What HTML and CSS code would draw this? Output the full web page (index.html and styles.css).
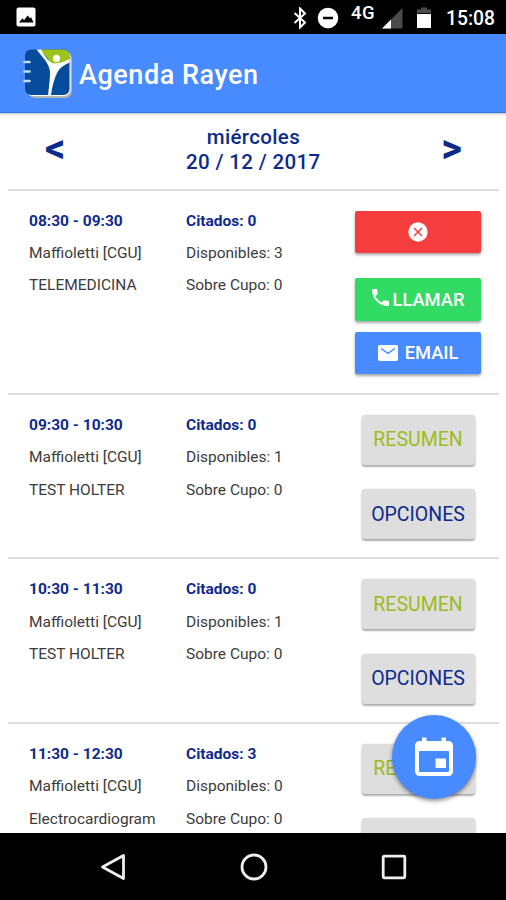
FILE: index.html
```
<!DOCTYPE html>
<html lang="es">
<head>
  <meta charset="UTF-8">
  <meta name="viewport" content="width=device-width, initial-scale=1">
  <title>Agenda Rayen</title>
  <link rel="stylesheet" href="styles.css">
</head>
<body>
  <div class="status-bar">
    <svg class="icon-image" width="20" height="20" viewBox="0 0 20 20"><rect x="0.5" y="0.5" width="19" height="19" rx="2" fill="#fff"/><path d="M3 15.500l3.200-4 2 1.500 3.500-4.500 2 2.500 1.500-.5 2.300 5z" fill="#000"/></svg>
    <svg class="icon-bluetooth" width="14" height="22" viewBox="0 0 14 22"><path d="M1.500 6l10.500 9.500-5 5V1.500l5 5L1.500 16" fill="none" stroke="#fff" stroke-width="2"/></svg>
    <svg class="icon-dnd" width="22" height="22" viewBox="0 0 22 22"><circle cx="11" cy="11" r="10.300" fill="#fff"/><path d="M6 11h10" stroke="#000" stroke-width="2.500"/></svg>
    <span class="red">4G</span>
    <svg class="icon-signal" width="21" height="21" viewBox="0 0 21 21"><path d="M20.500 0v20.500H0z" fill="#4b4b4b"/><path d="M9 11.500v9H0z" fill="#fff"/></svg>
    <svg class="icon-battery" width="16" height="22" viewBox="0 0 16 22"><path d="M1 6V2.500h4V0.500h6v2h4V6z" fill="#4b4b4b"/><path d="M1 7h14v14H1z" fill="#fff"/></svg>
    <span class="hora">15:08</span>
  </div>

  <header class="header">
    <svg class="logo" width="50" height="50" viewBox="0 0 50 50">
      <rect x="5" y="4" width="44" height="46" rx="7" fill="#b4b4b0"/>
      <rect x="3" y="2" width="44.500" height="46" rx="6.500" fill="#fff"/>
      <rect x="2" y="1.500" width="44.500" height="45.500" rx="6" fill="#064b9c"/>
      <path d="M17 1.500h23.500a6 6 0 0 1 6 6v5L30 17z" fill="#9dc41c"/>
      <path d="M13.500 1.500H18C21 7 25 13 30 15.500c5 0 11-1.500 16.500-4.500v3.500C41 17 36.500 20 34.500 24 31 31 29 39 28 47h-2.800c.8-10 2.300-18 1.600-25C25.500 14.500 18 7.500 13.500 1.500z" fill="#fff"/>
      <circle cx="33.500" cy="10.300" r="3.600" fill="#fff"/>
      <path d="M1.500 14h5M1.500 23.500h5M1.500 33h5" stroke="#c4dcff" stroke-width="2.600" stroke-linecap="round"/>
    </svg>
    <h1>Agenda Rayen</h1>
  </header>

  <main class="contenido">
    <div class="fecha">
      <span class="flecha">&lt;</span>
      <div class="dia">miércoles<br>20 / 12 / 2017</div>
      <span class="flecha">&gt;</span>
    </div>

    <div class="bloque bloque-abierto">
      <div class="col-hora"><b>08:30 - 09:30</b><p>Maffioletti [CGU]</p><p>TELEMEDICINA</p></div>
      <div class="col-cupos"><b>Citados: 0</b><p>Disponibles: 3</p><p>Sobre Cupo: 0</p></div>
      <div class="acciones">
        <button class="btn btn-cerrar"><svg width="20" height="20" viewBox="0 0 20 20"><circle cx="10" cy="10" r="9.700" fill="#fff"/><path d="M6 6l8 8M14 6l-8 8" stroke="#f53d3d" stroke-width="1.500"/></svg></button>
        <button class="btn btn-llamar"><svg width="17" height="17" viewBox="3 3 18 18"><path d="M6.620 10.790c1.440 2.830 3.760 5.140 6.590 6.590l2.200-2.200c.27-.27.67-.36 1.020-.24 1.120.37 2.330.57 3.570.57.55 0 1 .45 1 1V20c0 .55-.45 1-1 1-9.390 0-17-7.610-17-17 0-.55.45-1 1-1h3.500c.55 0 1 .45 1 1 0 1.250.2 2.450.57 3.570.11.35.03.74-.25 1.020z" fill="#fff"/></svg><span>LLAMAR</span></button>
        <button class="btn btn-email"><svg width="20" height="16" viewBox="0 0 20 16"><rect width="20" height="16" rx="1.800" fill="#fff"/><path d="M3 3.500l7 4.800 7-4.800" fill="none" stroke="#488aff" stroke-width="1.500"/></svg><span>EMAIL</span></button>
      </div>
    </div>

    <div class="bloque">
      <div class="col-hora"><b>09:30 - 10:30</b><p>Maffioletti [CGU]</p><p>TEST HOLTER</p></div>
      <div class="col-cupos"><b>Citados: 0</b><p>Disponibles: 1</p><p>Sobre Cupo: 0</p></div>
      <div class="acciones">
        <button class="btn-gris resumen">RESUMEN</button>
        <button class="btn-gris opciones">OPCIONES</button>
      </div>
    </div>

    <div class="bloque">
      <div class="col-hora"><b>10:30 - 11:30</b><p>Maffioletti [CGU]</p><p>TEST HOLTER</p></div>
      <div class="col-cupos"><b>Citados: 0</b><p>Disponibles: 1</p><p>Sobre Cupo: 0</p></div>
      <div class="acciones">
        <button class="btn-gris resumen">RESUMEN</button>
        <button class="btn-gris opciones">OPCIONES</button>
      </div>
    </div>

    <div class="bloque">
      <div class="col-hora"><b>11:30 - 12:30</b><p>Maffioletti [CGU]</p><p>Electrocardiogram</p></div>
      <div class="col-cupos"><b>Citados: 3</b><p>Disponibles: 0</p><p>Sobre Cupo: 0</p></div>
      <div class="acciones">
        <button class="btn-gris resumen">RESUMEN</button>
        <button class="btn-gris opciones"></button>
      </div>
    </div>

    <button class="fab">
      <svg width="40" height="40" viewBox="0 0 40 40"><path d="M8 0.500h4.500V4h15V0.500H32V4h2.500a4.500 4.500 0 0 1 4.500 4.500v26a4.500 4.500 0 0 1-4.500 4.500h-29A4.500 4.500 0 0 1 1 34.500v-26A4.500 4.500 0 0 1 5.500 4H8z" fill="#fff"/><rect x="5" y="14" width="30" height="21" rx="1" fill="#488aff"/><path d="M21.500 21.500H32V31H21.500z" fill="#fff"/></svg>
    </button>
  </main>

  <nav class="nav-bar">
    <svg width="26" height="28" viewBox="0 0 26 28"><path d="M23.500 2.500v23L2.500 14z" fill="none" stroke="#eee" stroke-width="2.800" stroke-linejoin="round"/></svg>
    <svg width="28" height="28" viewBox="0 0 28 28"><circle cx="14" cy="14" r="12" fill="none" stroke="#eee" stroke-width="2.800"/></svg>
    <svg width="26" height="26" viewBox="0 0 26 26"><rect x="2.200" y="2.200" width="21.600" height="21.600" rx="1" fill="none" stroke="#eee" stroke-width="2.800"/></svg>
  </nav>
</body>
</html>
```
FILE: styles.css
```
* {
  box-sizing: border-box;
}

body {
  margin: 0;
  height: 900px;
  display: flex;
  flex-direction: column;
  overflow: hidden;
  background-color: #fff;
  color: #3c3c3c;
  font-family: Roboto, sans-serif;
}

svg {
  display: block;
  flex: none;
}

p {
  margin: 0;
}

button {
  border: none;
  padding: 0;
  font-family: inherit;
  cursor: pointer;
}

.status-bar {
  flex: none;
  height: 34px;
  display: flex;
  align-items: flex-start;
  background-color: #000;
  color: #fff;
}

.icon-image {
  margin: 7px 0 0 16px;
}

.icon-bluetooth {
  margin: 7px 0 0 257px;
}

.icon-dnd {
  margin: 7px 0 0 10px;
}

.red {
  width: 26px;
  margin: 3px 0 0 12px;
  font-size: 18.5px;
  font-weight: 500;
  line-height: 20px;
  letter-spacing: 0.5px;
}

.icon-signal {
  margin: 8px 0 0 5px;
}

.icon-battery {
  margin: 7px 0 0 13px;
}

.hora {
  margin: 7px 0 0 14px;
  font-size: 19.3px;
  font-weight: 500;
  line-height: 23px;
  white-space: nowrap;
}

.header {
  flex: none;
  height: 79px;
  display: flex;
  align-items: center;
  padding-left: 23px;
  background-color: #488aff;
  border-bottom: 1px solid #2f7be6;
}

.header h1 {
  margin: 4px 0 0 6px;
  color: #fff;
  font-size: 27px;
  font-weight: 500;
  line-height: 32px;
  letter-spacing: 0.55px;
}

.contenido {
  position: relative;
  flex: 1;
  min-height: 0;
  overflow: hidden;
  padding: 0 7px 0 8px;
  box-shadow: inset 0 4px 3px -3px #bbb;
}

.fecha {
  height: 77.5px;
  display: flex;
  justify-content: space-between;
  padding: 12px 37px 0 37px;
  border-bottom: 2px solid #dedede;
  color: #0d2b8d;
}

.dia {
  font-size: 20.5px;
  font-weight: 500;
  line-height: 25px;
  text-align: center;
  letter-spacing: 0.35px;
}

.flecha {
  font-size: 40px;
  font-weight: 700;
  line-height: 48px;
}

.bloque {
  height: 164.6px;
  display: flex;
  padding: 14px 18px 0 21px;
  border-bottom: 2px solid #dedede;
  font-size: 15.5px;
  line-height: 32.4px;
  white-space: nowrap;
}

.bloque b {
  display: block;
  color: #0d2b8d;
  font-weight: 700;
}

.bloque-abierto {
  height: 204.2px;
}

.col-hora {
  width: 157px;
}

.col-cupos {
  width: 169px;
}

.acciones {
  width: 126px;
  display: flex;
  flex-direction: column;
  align-items: center;
  padding-top: 6px;
}

.btn {
  width: 126px;
  height: 42.5px;
  flex: none;
  display: flex;
  align-items: center;
  justify-content: center;
  border-radius: 2px;
  color: #fff;
  font-size: 18.3px;
  font-weight: 500;
  box-shadow: 0 2px 3px rgba(0, 0, 0, 0.35);
}

.btn-cerrar {
  margin-bottom: 25px;
  background-color: #f53d3d;
}

.btn-llamar {
  gap: 4px;
  margin-bottom: 11px;
  background-color: #32db64;
}

.btn-llamar svg {
  margin-bottom: 4px;
}

.btn-email {
  gap: 7px;
  background-color: #488aff;
}

.btn-gris {
  width: 113px;
  height: 50px;
  flex: none;
  margin-bottom: 24.6px;
  border-radius: 3px;
  background-color: #dedede;
  font-size: 19.5px;
  box-shadow: 0 2px 2px rgba(0, 0, 0, 0.3), 0 0 2px rgba(0, 0, 0, 0.15);
}

.resumen {
  color: #9dbb20;
}

.opciones {
  color: #0d2b8d;
}

/* boton flotante del calendario */
.fab {
  position: absolute;
  right: 30px;
  bottom: 34px;
  width: 84px;
  height: 84px;
  display: flex;
  align-items: center;
  justify-content: center;
  border-radius: 50%;
  background-color: #488aff;
  box-shadow: 0 2px 4px rgba(0, 0, 0, 0.45);
}

.nav-bar {
  flex: none;
  height: 67px;
  display: flex;
  align-items: center;
  justify-content: space-between;
  padding: 0 99px 0 100px;
  background-color: #000;
}
```
